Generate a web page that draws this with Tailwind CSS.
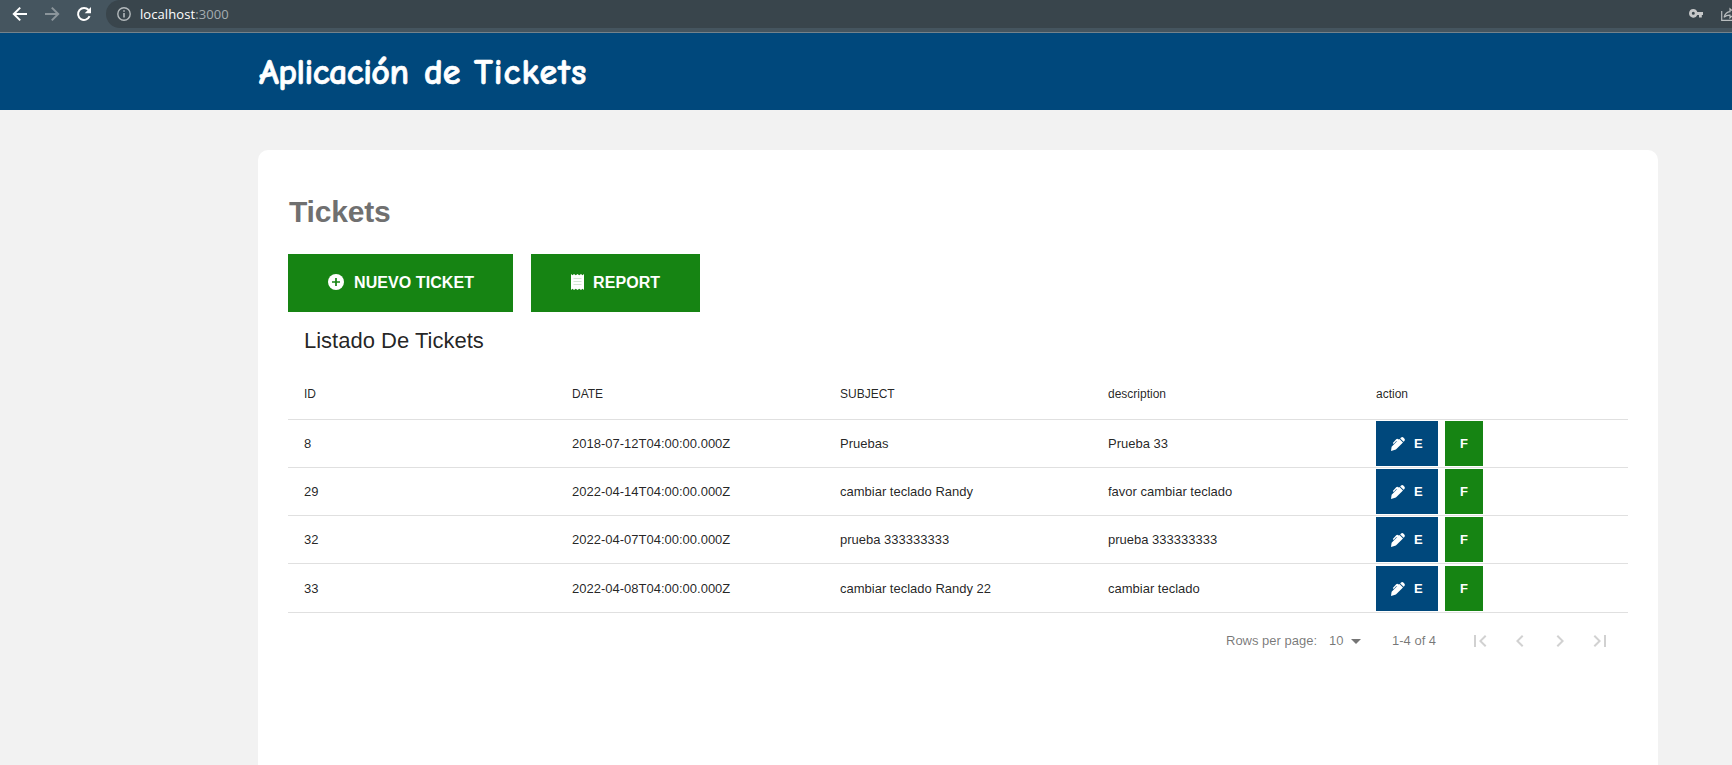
<!DOCTYPE html>
<html lang="es">
<head>
<meta charset="utf-8">
<title>Aplicación de Tickets</title>
<script src="https://cdn.jsdelivr.net/npm/@tailwindcss/browser@4"></script>
</head>
<body class="h-[765px] overflow-hidden bg-[#f2f2f2] font-['Liberation_Sans',Arial,sans-serif] text-black/87">
<svg class="hidden">
  <symbol id="pen" viewBox="0 0 14 14"><path d="M0 14 .6 9.800 6.300 4.100 4.900 4.500 2.700 6.900 1.800 6.100 5.200 2.200Q6 1.500 6.800 1.900L8 2.500 8.500 2 12 5.500 4.900 12.400ZM9.200 1.400 10 .6Q11.300-.4 12.600.7L13.300 1.400Q14.400 2.700 13.400 4L12.600 4.800Z"/></symbol>
</svg>

<div class="flex h-8 bg-[#45555f]">
  <div class="flex w-[106px] shrink-0 pt-[6px] pl-[12px] gap-4 text-white">
    <svg class="size-4" viewBox="0 0 16 16" fill="none" stroke="currentColor" stroke-width="2"><path d="M15 8H2.5M8.2 1.6 1.8 8l6.4 6.4"/></svg>
    <svg class="size-4 text-[#8b959b]" viewBox="0 0 16 16" fill="none" stroke="currentColor" stroke-width="2"><path d="M1 8h12.5M7.8 1.6 14.2 8l-6.4 6.4"/></svg>
    <svg class="size-4" viewBox="0 0 16 16" fill="none" stroke="currentColor" stroke-width="2"><path d="M13.6 10.2A6 6 0 1 1 12.6 4"/><path d="M15 1v6.300H8.700Z" fill="currentColor" stroke="none"/></svg>
  </div>
  <div class="flex h-7 grow rounded-bl-[14px] rounded-tl-[14px] bg-[#39454c] pl-[11px]">
    <svg class="mt-[7px] size-[14px] text-[#b4babd]" viewBox="0 0 14 14" fill="none" stroke="currentColor" stroke-width="1.4"><circle cx="7" cy="7" r="6.2"/><path d="M7 6v4.500M7 3.300v1.500" stroke-width="1.600"/></svg>
    <p class="ml-[9px] mt-[4px] font-['Open_Sans',sans-serif] text-[13px] leading-5 tracking-[0.080px] text-white">localhost<span class="text-[#a5acb0]">:3000</span></p>
    <svg class="ml-auto mt-[9px] h-[9px] w-[14px] text-[#c6c8c9]" viewBox="0 0 14 9" fill="currentColor"><path fill-rule="evenodd" d="M4.300 0A4.300 4.300 0 0 1 8.300 3H14v3h-1.200v2.500H10V6H8.300A4.300 4.300 0 1 1 4.300 0Zm0 2.800a1.500 1.500 0 1 0 0 3 1.500 1.500 0 0 0 0-3Z"/></svg>
    <svg class="ml-[18px] mt-[7px] h-[15px] w-[11px] text-[#b9bdbf]" viewBox="0 0 11 15" fill="none" stroke="currentColor" stroke-width="1.200"><path d="M.7 4v9.400H11M3 10.300C4 7 6 5 9 4.700V1.800L11 3.500M3 10.300C5 8.500 7 8 9 8.100v2.700l2-1.800"/></svg>
  </div>
</div>

<header class="flex h-[78px] items-center border-t border-[#74828b] bg-[#00487c] pl-[259px]">
  <h1 class="flex whitespace-pre pt-[2px] font-['Comic_Sans_MS','Comic_Neue',cursive] text-[36px] font-bold leading-10 text-white [-webkit-text-stroke:0.7px_white]"><span class="w-[165px] tracking-[-0.550px]">Aplicación</span><span class="w-[50px]">de</span><span class="tracking-[1px]">Tickets</span></h1>
</header>

<main class="ml-[258px] mt-10 h-[615px] w-[1400px] overflow-hidden rounded-t-[10px] bg-white px-[30px] pt-[42px]">
  <h2 class="pl-px text-[30px] font-bold leading-10 tracking-[-0.200px] text-[#707070]">Tickets</h2>
  <div class="mt-[22px] flex h-[58px] gap-[18px] text-[16px] font-bold text-white">
    <button class="flex w-[225px] items-center bg-[#168413] pl-10">
      <svg class="mb-[2px] size-4" viewBox="0 0 16 16"><circle cx="8" cy="8" r="8" fill="white"/><path d="M8 4v8M4 8h8" stroke="#168413" stroke-width="1.700"/></svg>
      <span class="ml-[10px] tracking-[0.080px]">NUEVO TICKET</span>
    </button>
    <button class="flex w-[169px] items-center bg-[#168413] pl-10">
      <svg class="mb-[2px] h-4 w-[13px]" viewBox="0 0 13 16"><path fill="white" d="M0 0 1.500 1.200 3 0 4.800 1.200 6.500 0 8.200 1.200 10 0 11.500 1.200 13 0V16L11.500 14.800 10 16 8.200 14.800 6.500 16 4.800 14.800 3 16 1.500 14.800 0 16Z"/><path d="M2.500 4.500h8M2.500 7.500h8M2.500 10.500h8" stroke="#d3e6d3"/></svg>
      <span class="ml-[9px] tracking-[0.080px]">REPORT</span>
    </button>
  </div>
  <h3 class="mt-[13px] pl-4 text-[22px] leading-8">Listado De Tickets</h3>

  <div class="mt-[11px] text-[13px]">
    <div class="grid h-[52px] grid-cols-5 items-center border-b border-[#e0e0e0] text-[12px] *:pl-4">
      <span>ID</span><span>DATE</span><span>SUBJECT</span><span>description</span><span>action</span>
    </div>
    <div class="grid h-12 grid-cols-5 items-center border-b border-[#e0e0e0] *:pl-4">
      <span>8</span><span>2018-07-12T04:00:00.000Z</span><span>Pruebas</span><span>Prueba 33</span>
      <div class="flex gap-[7px] font-bold text-white"><button class="flex h-[45px] w-[62px] items-center bg-[#00487c] pl-[15px]"><svg class="size-[14px]" fill="white"><use href="#pen"/></svg><span class="ml-[9px]">E</span></button><button class="h-[45px] w-[38px] bg-[#168413]">F</button></div>
    </div>
    <div class="grid h-12 grid-cols-5 items-center border-b border-[#e0e0e0] *:pl-4">
      <span>29</span><span>2022-04-14T04:00:00.000Z</span><span>cambiar teclado Randy</span><span>favor cambiar teclado</span>
      <div class="flex gap-[7px] font-bold text-white"><button class="flex h-[45px] w-[62px] items-center bg-[#00487c] pl-[15px]"><svg class="size-[14px]" fill="white"><use href="#pen"/></svg><span class="ml-[9px]">E</span></button><button class="h-[45px] w-[38px] bg-[#168413]">F</button></div>
    </div>
    <div class="grid h-12 grid-cols-5 items-center border-b border-[#e0e0e0] *:pl-4">
      <span>32</span><span>2022-04-07T04:00:00.000Z</span><span>prueba 333333333</span><span>prueba 333333333</span>
      <div class="flex gap-[7px] font-bold text-white"><button class="flex h-[45px] w-[62px] items-center bg-[#00487c] pl-[15px]"><svg class="size-[14px]" fill="white"><use href="#pen"/></svg><span class="ml-[9px]">E</span></button><button class="h-[45px] w-[38px] bg-[#168413]">F</button></div>
    </div>
    <div class="grid h-[49px] grid-cols-5 items-center border-b border-[#e0e0e0] pt-px *:pl-4">
      <span>33</span><span>2022-04-08T04:00:00.000Z</span><span>cambiar teclado Randy 22</span><span>cambiar teclado</span>
      <div class="flex gap-[7px] font-bold text-white"><button class="flex h-[45px] w-[62px] items-center bg-[#00487c] pl-[15px]"><svg class="size-[14px]" fill="white"><use href="#pen"/></svg><span class="ml-[9px]">E</span></button><button class="h-[45px] w-[38px] bg-[#168413]">F</button></div>
    </div>
    <div class="flex h-14 items-center pl-[938px] text-black/54">
      <span class="w-[103px]">Rows per page:</span><span class="w-[15px]">10</span>
      <svg class="size-6" viewBox="0 0 24 24" fill="currentColor"><path d="m7 10 5 5 5-5z"/></svg>
      <span class="ml-[24px] w-[76px]">1-4 of 4</span>
      <div class="flex gap-4 text-black/18">
        <svg class="size-6" viewBox="0 0 24 24" fill="currentColor"><path d="M18.410 16.590 13.820 12l4.590-4.590L17 6l-6 6 6 6zM6 6h2v12H6z"/></svg>
        <svg class="size-6" viewBox="0 0 24 24" fill="currentColor"><path d="M15.410 7.410 14 6l-6 6 6 6 1.410-1.410L10.830 12z"/></svg>
        <svg class="size-6" viewBox="0 0 24 24" fill="currentColor"><path d="M10 6 8.590 7.410 13.170 12l-4.580 4.590L10 18l6-6z"/></svg>
        <svg class="size-6" viewBox="0 0 24 24" fill="currentColor"><path d="M5.590 7.410 10.180 12l-4.590 4.590L7 18l6-6-6-6zM16 6h2v12h-2z"/></svg>
      </div>
    </div>
  </div>
</main>
</body>
</html>
